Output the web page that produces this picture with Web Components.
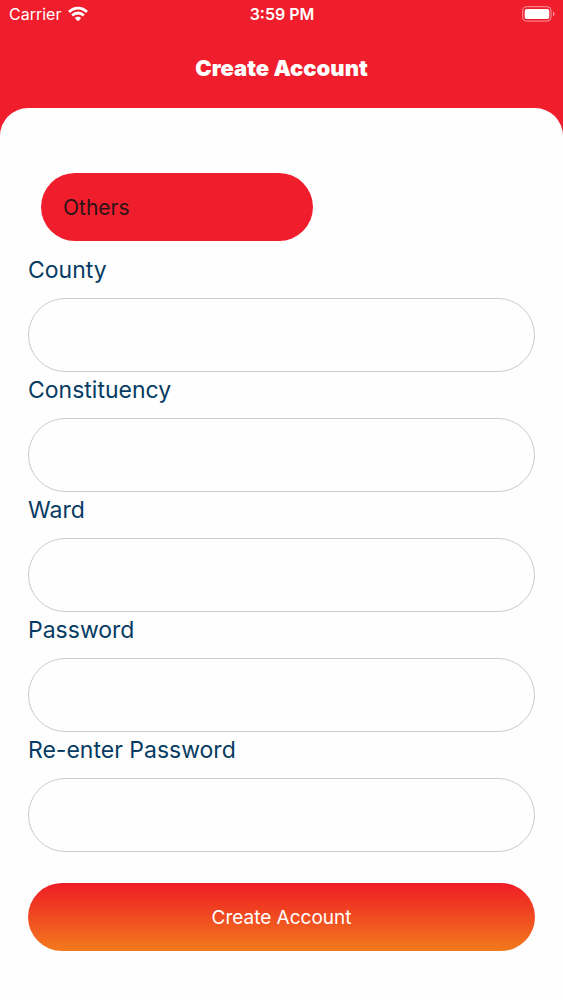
<!DOCTYPE html>
<html lang="en">
<head>
<meta charset="utf-8">
<meta name="viewport" content="width=device-width, initial-scale=1">
<title>Create Account</title>
<style>
  body {
    margin: 0;
    font-family: Inter, "Liberation Sans", sans-serif;
    --primary: #f01e2c;
    --label: #063b63;
    --line: #cdc9cf;
  }
</style>
</head>
<body>
<app-screen>
  <status-bar slot="status" carrier="Carrier" time="3:59 PM"></status-bar>
  <span slot="title">Create Account</span>
  <signup-form></signup-form>
</app-screen>

<script>
class StatusBar extends HTMLElement {
  constructor() {
    super();
    this.attachShadow({ mode: "open" });
    this.shadowRoot.innerHTML = `
      <style>
        :host {
          display: grid;
          grid-template-columns: 1fr auto 1fr;
          align-items: center;
          height: 28px;
          padding: 0 8px 0 9px;
          font-size: 16px;
          line-height: 20px;
          color: white;
        }

        .carrier {
          display: flex;
          align-items: center;
          gap: 7px;
        }

        .time {
          font-weight: 600;
        }

        .battery {
          justify-self: end;
        }

        svg {
          display: block;
        }
      </style>
      <div class="carrier">
        <span id="carrier"></span>
        <svg width="20" height="16" viewBox="0 0 20 16" fill="none" stroke="white" aria-hidden="true">
          <path d="M1 6 C6 .7 14 .7 19 6" stroke-width="2.8"/>
          <path d="M4.2 9.4 C7.5 6.2 12.5 6.2 15.8 9.4" stroke-width="2.8"/>
          <path d="M10 15.2 L6.9 12.2 C8.6 10.4 11.4 10.4 13.1 12.2 Z" fill="white" stroke="none"/>
        </svg>
      </div>
      <div class="time" id="time"></div>
      <svg class="battery" width="33" height="16" viewBox="0 0 33 16" role="img" aria-label="Battery full">
        <rect x=".7" y=".7" width="28.4" height="14.4" rx="4" fill="none" stroke="white" stroke-opacity=".55"/>
        <rect x="2.7" y="2.9" width="24.6" height="10" rx="2" fill="white"/>
        <path d="M31 5.5 C33 6.5 33 9.3 31 10.3 Z" fill="white" fill-opacity=".6"/>
      </svg>
    `;
  }

  connectedCallback() {
    this.shadowRoot.querySelector("#carrier").textContent = this.getAttribute("carrier");
    this.shadowRoot.querySelector("#time").textContent = this.getAttribute("time");
  }
}

customElements.define("status-bar", StatusBar);

class AppScreen extends HTMLElement {
  constructor() {
    super();
    this.attachShadow({ mode: "open" });
    this.shadowRoot.innerHTML = `
      <style>
        :host {
          display: flex;
          flex-direction: column;
          min-height: 100vh;
          background: var(--primary);
        }

        h1 {
          margin: 0;
          padding: 24px 0;
          font-size: 22px;
          line-height: 32px;
          font-weight: 900;
          text-align: center;
          color: white;
        }

        main {
          flex: 1;
          padding: 65px 28px 48px;
          border-radius: 28px 28px 0 0;
          background: #fefefe;
        }
      </style>
      <slot name="status"></slot>
      <h1><slot name="title"></slot></h1>
      <main><slot></slot></main>
    `;
  }
}

customElements.define("app-screen", AppScreen);

class PillSelect extends HTMLElement {
  constructor() {
    super();
    this.attachShadow({ mode: "open" });
    this.shadowRoot.innerHTML = `
      <style>
        :host {
          display: block;
        }

        select {
          appearance: none;
          display: block;
          box-sizing: border-box;
          width: 100%;
          height: 68px;
          padding: 0 22px;
          border: 0;
          border-radius: 34px;
          font: inherit;
          font-size: 21px;
          color: #2b1416;
          background: var(--primary);
        }
      </style>
      <select></select>
    `;
  }

  connectedCallback() {
    const select = this.shadowRoot.querySelector("select");
    select.setAttribute("aria-label", this.getAttribute("label"));
    this.getAttribute("options").split(",").forEach((name) => {
      select.add(new Option(name));
    });
  }
}

customElements.define("pill-select", PillSelect);

class FormField extends HTMLElement {
  constructor() {
    super();
    this.attachShadow({ mode: "open" });
    this.shadowRoot.innerHTML = `
      <style>
        :host {
          display: block;
        }

        label {
          display: block;
          padding: 2px 0 12px;
          font-size: 23px;
          line-height: 32px;
          color: var(--label);
        }

        input {
          display: block;
          box-sizing: border-box;
          width: 100%;
          height: 74px;
          padding: 0 24px;
          border: 1px solid var(--line);
          border-radius: 37px;
          font: inherit;
          font-size: 21px;
          color: var(--label);
          background: transparent;
        }
      </style>
      <label for="field"><slot></slot></label>
      <input id="field">
    `;
  }

  connectedCallback() {
    this.shadowRoot.querySelector("input").type = this.getAttribute("type") || "text";
  }
}

customElements.define("form-field", FormField);

class PillButton extends HTMLElement {
  constructor() {
    super();
    this.attachShadow({ mode: "open" });
    this.shadowRoot.innerHTML = `
      <style>
        :host {
          display: block;
        }

        button {
          display: block;
          width: 100%;
          height: 68px;
          border: 0;
          border-radius: 34px;
          font: inherit;
          font-size: 19px;
          color: white;
          background: linear-gradient(#ee1c25, #f27a1c);
        }
      </style>
      <button type="button"><slot></slot></button>
    `;
  }
}

customElements.define("pill-button", PillButton);

class SignupForm extends HTMLElement {
  constructor() {
    super();
    this.attachShadow({ mode: "open" });
    this.shadowRoot.innerHTML = `
      <style>
        :host {
          display: block;
        }

        pill-select {
          max-width: 272px;
          margin: 0 13px 11px;
        }

        pill-button {
          margin-top: 31px;
        }
      </style>
      <form>
        <pill-select label="Category" options="Others"></pill-select>
        <form-field>County</form-field>
        <form-field>Constituency</form-field>
        <form-field>Ward</form-field>
        <form-field type="password">Password</form-field>
        <form-field type="password">Re-enter Password</form-field>
        <pill-button>Create Account</pill-button>
      </form>
    `;
  }
}

customElements.define("signup-form", SignupForm);
</script>
</body>
</html>
